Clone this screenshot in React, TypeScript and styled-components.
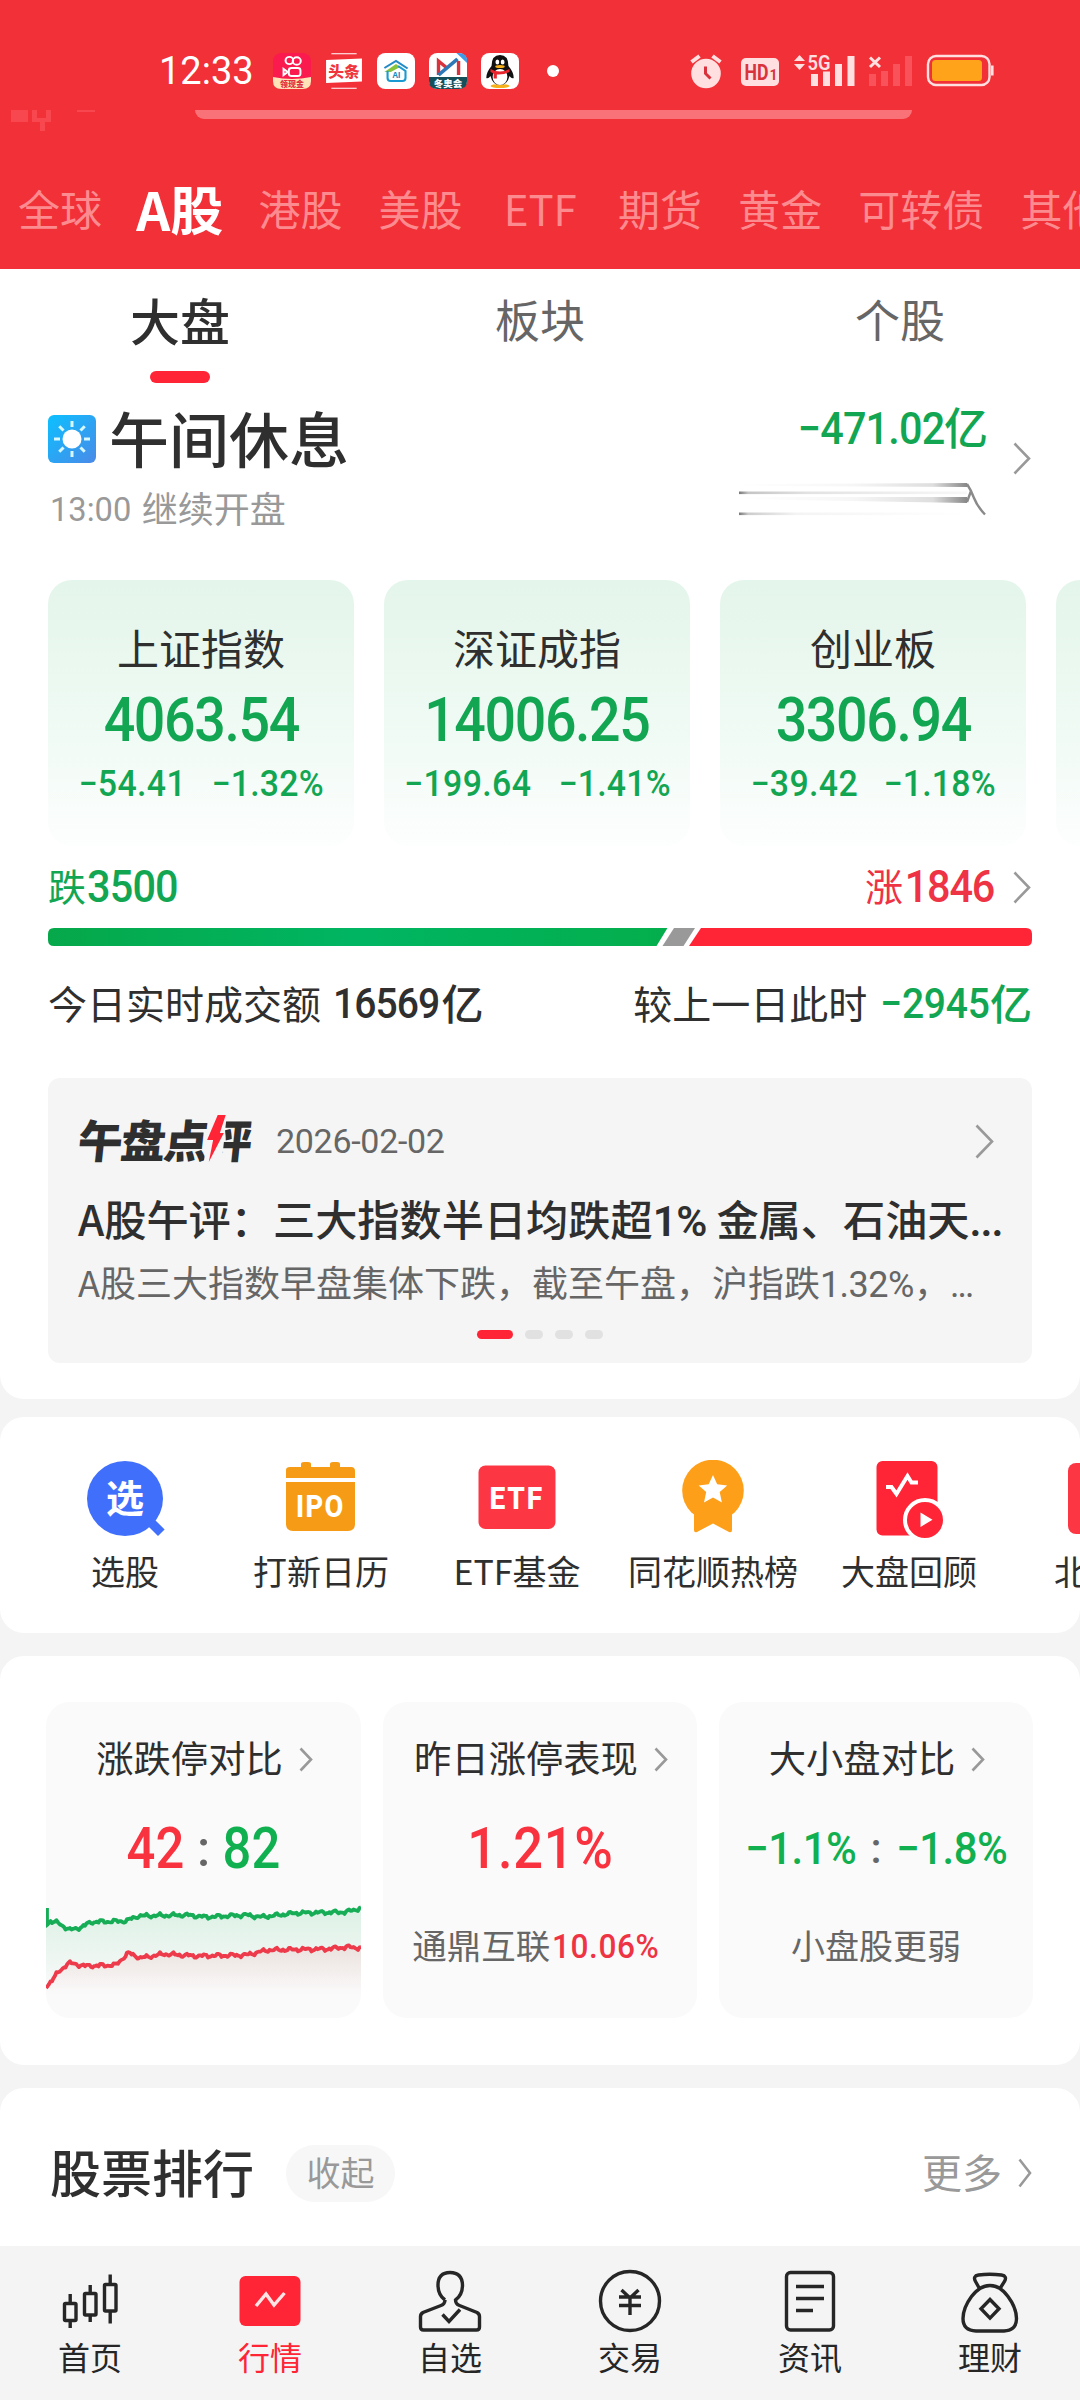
import React from "react";
import styled, { createGlobalStyle } from "styled-components";

const CJK = `"Noto Sans CJK SC", sans-serif`;
const DIGIT = `Roboto, "Noto Sans CJK SC", sans-serif`;

const C = {
  header: "#f23038",
  red: "#ff2436",
  redText: "#ee3344",
  green: "#12a652",
  ink: "#2f2f2f",
  mid: "#666666",
  soft: "#999999",
  page: "#f4f4f4",
};

const GlobalStyle = createGlobalStyle`
  * { box-sizing: border-box; }
  body { margin: 0; background: ${C.page}; }
`;

const Screen = styled.div`
  width: 1080px;
  height: 2400px;
  overflow: hidden;
  display: flex;
  flex-direction: column;
  background: ${C.page};
  font-family: ${CJK};
  color: ${C.ink};
`;

const Txt = styled.span<{ $s: number; $c?: string; $w?: number; $ls?: number }>`
  padding-bottom: 4px;
  font-size: ${(p) => p.$s}px;
  line-height: ${(p) => Math.round(p.$s * 1.2)}px;
  color: ${(p) => p.$c ?? "inherit"};
  font-weight: ${(p) => p.$w ?? 400};
  letter-spacing: ${(p) => p.$ls ?? 0}px;
  white-space: nowrap;
`;

/* Digits are condensed horizontally by $k, anchored at $o, with $m as margin */
const Num = styled(Txt)<{ $k?: number; $o?: string; $m?: string }>`
  padding-bottom: 0;
  display: block;
  font-family: ${DIGIT};
  font-weight: ${(p) => p.$w ?? 500};
  transform: ${(p) => (p.$k ? `scaleX(${p.$k})` : "none")};
  transform-origin: ${(p) => p.$o ?? "center"};
  margin: ${(p) => p.$m ?? "0"};
`;

const Latin = styled.span<{ $ls?: number; $w?: number }>`
  font-family: ${DIGIT};
  letter-spacing: ${(p) => p.$ls ?? 0}px;
  font-weight: ${(p) => p.$w ?? 400};
`;

/* ---------- header ---------- */

const Header = styled.header`
  height: 269px;
  flex: none;
  background: ${C.header};
  display: flex;
  flex-direction: column;
`;

const StatusBar = styled.div`
  height: 110px;
  padding: 32px 86px 0 159px;
  display: flex;
  align-items: center;
  justify-content: space-between;
`;

const StatusGroup = styled.div<{ $gap: number }>`
  display: flex;
  align-items: center;
  gap: ${(p) => p.$gap}px;
`;

const Clock = styled(Num)`
  width: 100px;
`;

const AppIcons = styled.div`
  display: flex;
  gap: 14px;
`;

const Dot = styled.i`
  width: 12px;
  height: 12px;
  margin-left: 14px;
  border-radius: 50%;
  background: #fff;
`;

const Peek = styled.div`
  height: 22px;
  display: flex;
`;

const PeekLeft = styled.svg`
  width: 195px;
  height: 22px;
`;

const PeekBar = styled.div`
  width: 717px;
  height: 9px;
  border-radius: 0 0 14px 14px;
  background: #f87277;
`;

const MarketTabs = styled.nav`
  height: 137px;
  width: 1140px;
  padding: 18px 0 0 18px;
  display: flex;
  align-items: center;
  gap: 36.2px;
`;

const MarketTab = styled(Txt)<{ $width: number; $shift: number }>`
  width: ${(p) => p.$width}px;
  margin: 0 ${(p) => p.$shift}px 0 ${(p) => -p.$shift}px;
  flex: none;
  text-align: center;
`;

/* ---------- market overview ---------- */

const Panel = styled.section<{ $h: number; $r: string }>`
  height: ${(p) => p.$h}px;
  flex: none;
  background: #fff;
  border-radius: ${(p) => p.$r};
  overflow: hidden;
`;

const SubTabs = styled.nav`
  height: 116px;
  display: grid;
  grid-template-columns: repeat(3, 1fr);
`;

const SubTab = styled.div`
  display: flex;
  flex-direction: column;
  align-items: center;
  padding-top: 12px;
`;

const SubTabLabel = styled.div`
  height: 80px;
  display: flex;
  align-items: center;
`;

const Underline = styled.i`
  width: 60px;
  height: 12px;
  margin-top: 10px;
  border-radius: 6px;
  background: ${C.red};
`;

const Session = styled.div`
  height: 195px;
  padding: 16px 49px 0 48px;
  display: flex;
  justify-content: space-between;
`;

const SessionTitle = styled.div`
  height: 76px;
  display: flex;
  align-items: center;
  gap: 13px;
`;

const SessionNote = styled.div`
  height: 60px;
  padding: 5px 0 0 2px;
  display: flex;
  align-items: center;
  gap: 7px;
`;

const Flow = styled.div`
  display: flex;
  align-items: flex-start;
  gap: 25px;
`;

const FlowColumn = styled.div`
  display: flex;
  flex-direction: column;
  align-items: flex-end;
  margin-top: -1px;
`;

const ChevronBox = styled.div<{ $top: number }>`
  display: flex;
  padding-top: ${(p) => p.$top}px;
`;

const Line = styled.div`
  display: flex;
  align-items: center;
`;

const IndexRow = styled.div`
  display: flex;
  gap: 30px;
  width: 1400px;
  padding-left: 48px;
`;

const IndexCard = styled.div`
  width: 306px;
  height: 266px;
  flex: none;
  border-radius: 24px;
  background: linear-gradient(#e4f5eb, #eefaf3 50%, #fdfefe);
  display: flex;
  flex-direction: column;
  align-items: center;
  padding-top: 36px;
`;

const IndexName = styled.div`
  height: 65px;
  display: flex;
  align-items: center;
`;

const IndexValue = styled.div`
  height: 78px;
  display: flex;
  align-items: center;
`;

const IndexChange = styled.div`
  height: 50px;
  display: flex;
  align-items: center;
  gap: 19px;
`;

const Breadth = styled.div`
  height: 82px;
  padding: 0 49px 0 48px;
  display: flex;
  align-items: center;
  justify-content: space-between;
`;

const BreadthSide = styled.div<{ $gap: number }>`
  display: flex;
  align-items: center;
  gap: ${(p) => p.$gap}px;
`;

const BreadthBar = styled.svg`
  display: block;
  margin-left: 48px;
`;

const Turnover = styled.div`
  height: 116px;
  padding: 0 48px;
  display: flex;
  align-items: center;
  justify-content: space-between;
`;

const News = styled.article`
  height: 285px;
  margin: 16px 48px 0;
  padding: 26px 30px 0;
  border-radius: 12px;
  background: #f5f5f5;
`;

const NewsHead = styled.div`
  height: 74px;
  display: flex;
  align-items: center;
  justify-content: space-between;
  padding-right: 8px;
`;

const Brand = styled.div`
  display: flex;
  align-items: center;
  width: 198px;
  transform: skewX(-6deg);
`;

const BrandTail = styled.div`
  position: relative;
  display: flex;
`;

const Bolt = styled.svg`
  position: absolute;
  left: -1px;
  top: 2px;
`;

const NewsTitle = styled.div`
  height: 87px;
  display: flex;
  align-items: center;
`;

const NewsText = styled.div`
  height: 40px;
  display: flex;
  align-items: center;
`;

const Pager = styled.div`
  height: 10px;
  margin-top: 25px;
  display: flex;
  justify-content: center;
  gap: 12px;
`;

const PagerDot = styled.i<{ $on?: boolean }>`
  width: ${(p) => (p.$on ? 36 : 18)}px;
  height: 9px;
  border-radius: 5px;
  background: ${(p) => (p.$on ? C.red : "#e1e1e1")};
`;

/* ---------- shortcuts ---------- */

const Shortcuts = styled.div`
  width: 1240px;
  padding: 43px 0 0 27px;
  display: flex;
`;

const Shortcut = styled.div`
  width: 196px;
  display: flex;
  flex-direction: column;
  align-items: center;
`;

const ShortcutLabel = styled.div`
  height: 64px;
  display: flex;
  align-items: center;
`;

/* ---------- statistics ---------- */

const Stats = styled.div`
  padding: 46px 46px 0;
  display: grid;
  grid-template-columns: 315px 314px 314px;
  gap: 22px;
`;

const StatCard = styled.div`
  height: 316px;
  border-radius: 24px;
  background: #fafafa;
  overflow: hidden;
  display: flex;
  flex-direction: column;
  align-items: center;
  padding-top: 30px;
`;

const StatTitle = styled.div`
  height: 54px;
  padding-left: 2px;
  display: flex;
  align-items: center;
  gap: 16px;
`;

const StatValue = styled.div<{ $gap?: number }>`
  height: 70px;
  margin-top: 28px;
  display: flex;
  align-items: center;
  gap: ${(p) => p.$gap ?? 15}px;
`;

const StatNote = styled.div`
  height: 60px;
  margin-top: 32px;
  display: flex;
  align-items: center;
  gap: 2px;
`;

/* ---------- ranking ---------- */

const Ranking = styled.div`
  height: 158px;
  padding: 12px 48px 0 50px;
  display: flex;
  align-items: center;
  justify-content: space-between;
`;

const Pill = styled.div`
  width: 109px;
  height: 57px;
  margin-left: 32px;
  border-radius: 29px;
  background: #f7f7f7;
  display: flex;
  align-items: center;
  justify-content: center;
`;

/* ---------- bottom navigation ---------- */

const BottomNav = styled.nav`
  height: 154px;
  flex: none;
  display: grid;
  grid-template-columns: repeat(6, 1fr);
  background: ${C.page};
`;

const NavItem = styled.div`
  display: flex;
  flex-direction: column;
  align-items: center;
  padding-top: 20px;
`;

const NavLabel = styled.div`
  height: 44px;
  margin-top: 2px;
  display: flex;
  align-items: center;
`;

const Gap = styled.div<{ $h: number }>`
  height: ${(p) => p.$h}px;
  flex: none;
`;

/* ---------- drawings ---------- */

const Chevron = ({ w, h, c = "#999", s = 2.6 }: { w: number; h: number; c?: string; s?: number }) => (
  <svg width={w} height={h} viewBox={`0 0 ${w} ${h}`}>
    <path d={`M1.5 1.5L${w - 2} ${h / 2}L1.5 ${h - 1.5}`} fill="none" stroke={c} strokeWidth={s} />
  </svg>
);

const Tile = ({ bg, children }: { bg: string; children: React.ReactNode }) => (
  <svg width="38" height="36" viewBox="0 0 36 36" preserveAspectRatio="none">
    <rect width="36" height="36" rx="8" fill={bg} />
    {children}
  </svg>
);

const StatusApps = () => (
  <AppIcons>
    <Tile bg="#fb1a4e">
      <g fill="none" stroke="#fff" strokeWidth="1.9">
        <circle cx="15.500" cy="7.500" r="3.600" />
        <circle cx="22.500" cy="8" r="3.800" />
        <rect x="15" y="15" width="11" height="8" rx="2.500" />
        <path d="M14 19l-4-3v6z" />
      </g>
      <path d="M0 24q18 4 36 0v4q0 8-8 8H8q-8 0-8-8z" fill="#ffe3b8" />
      <text x="18" y="34" fontSize="7.500" fontWeight="900" textAnchor="middle" fill="#e0323c">领现金</text>
    </Tile>
    <Tile bg={C.header}>
      <path d="M6 .7h24M6 35.3h24" stroke="#fff" strokeWidth="1" />
      <path d="M1 7l34-1.5v23L1 30z" fill="#fff" />
      <text x="18" y="24" fontSize="15" fontWeight="900" textAnchor="middle" fill="#f0353d">头条</text>
    </Tile>
    <Tile bg="#fff">
      <path d="M7 15L18 8l11 7.500" fill="none" stroke="#2489c8" strokeWidth="2" />
      <path d="M7 19l11-8 4 3-9 5" fill="#86c440" />
      <path d="M10 18v7q0 3 3 3h11q3 0 3-3v-7l-7-5" fill="none" stroke="#1a9ad0" strokeWidth="2" />
      <text x="18.500" y="25" fontSize="8" fontWeight="700" textAnchor="middle" fill="#1a8ac0">AI</text>
    </Tile>
    <Tile bg="#fff">
      <path d="M26 0h2q8 0 8 8v2z" fill="#3f9be8" />
      <path d="M9 22V8l8 7" fill="none" stroke="#d8323c" strokeWidth="3.200" />
      <path d="M9 22L27 6" stroke="#2c78b8" strokeWidth="3.600" />
      <path d="M28 8v14" stroke="#d8323c" strokeWidth="3.200" />
      <path d="M0 24h36v4q0 8-8 8H8q-8 0-8-8z" fill="#15505a" />
      <text x="18" y="34" fontSize="9" fontWeight="900" textAnchor="middle" fill="#fff">冬奥会</text>
    </Tile>
    <Tile bg="#fff">
      <ellipse cx="18" cy="33" rx="9" ry="2" fill="#f5b01c" />
      <path d="M10 13q0-11 8-11t8 11q5 6 5 12-2 1-4-2-2 9-9 9t-9-9q-2 3-4 2 0-6 5-12z" fill="#111" />
      <ellipse cx="18" cy="24" rx="7" ry="8" fill="#fff" />
      <ellipse cx="15.500" cy="9" rx="1.800" ry="2.600" fill="#fff" />
      <ellipse cx="20.500" cy="9" rx="1.800" ry="2.600" fill="#fff" />
      <ellipse cx="18" cy="13.500" rx="4.500" ry="1.500" fill="#f5b01c" />
      <path d="M9 16q9 5 18 0v3q-6 3-12 2.500v4h-3v-5l-3-1.500z" fill="#e8242c" />
    </Tile>
  </AppIcons>
);

const P = "#ffdfe0";
const StatusSignals = () => (
  <svg width="304" height="38" viewBox="690 52 304 38">
    <circle cx="706" cy="73.500" r="14.800" fill={P} />
    <path d="M691.500 62l8-6M712.500 56l8 6" stroke={P} strokeWidth="4" />
    <path d="M705.500 66.500v7l5 5" fill="none" stroke="#d8333c" strokeWidth="3" />
    <rect x="741" y="58" width="38" height="28" rx="5" fill={P} />
    <text x="744.500" y="80" fontFamily="Roboto" fontWeight="700" fontSize="22" textLength="24" lengthAdjust="spacingAndGlyphs" fill="#d8333c">HD</text>
    <text x="769.500" y="80" fontFamily="Roboto" fontWeight="700" fontSize="14" fill="#d8333c">1</text>
    <path d="M794 61l5.500-6 5.500 6zM794 64l5.500 6 5.500-6z" fill={P} />
    <text x="807.500" y="69.500" fontFamily="Roboto" fontWeight="600" fontSize="21" textLength="23" lengthAdjust="spacingAndGlyphs" fill={P}>5G</text>
    <path d="M811 74h7v12h-7zM823 71.500h7V86h-7zM835 64h7v22h-7zM847.500 56h7v30h-7z" fill={P} />
    <path d="M870 57.500l10 9.500M880 57.500l-10 9.500" stroke={P} strokeWidth="3" />
    <path d="M869 74h7v12h-7zM881 71h7v15h-7zM893 64h7v22h-7zM905 56h7v30h-7z" fill="#f9525a" />
    <rect x="928" y="56" width="61.500" height="29" rx="8" fill="none" stroke={P} strokeWidth="2.400" />
    <rect x="932" y="60" width="50" height="21" rx="3.500" fill="#ffa31a" />
    <path d="M992.300 65.500v10" stroke={P} strokeWidth="2.600" />
  </svg>
);

const Sun = () => (
  <svg width="48" height="48" viewBox="0 0 48 48">
    <defs>
      <linearGradient id="sky" x1="0" y1="0" x2="1" y2="1">
        <stop offset="0" stopColor="#0cc0ff" />
        <stop offset="1" stopColor="#4a8ae8" />
      </linearGradient>
    </defs>
    <rect width="48" height="48" rx="6" fill="url(#sky)" />
    <circle cx="24" cy="24" r="9.500" fill="#fff" />
    {[0, 45, 90, 135, 180, 225, 270, 315].map((a) => (
      <path key={a} d="M24 6v6" stroke="#d8f8ff" strokeWidth="3" transform={`rotate(${a} 24 24)`} />
    ))}
  </svg>
);

const FlowSpark = () => (
  <svg width="249" height="38" viewBox="740 480 249 38">
    <defs>
      <linearGradient id="fa"><stop offset="0" stopColor="#777" /><stop offset=".04" stopColor="#c4c4c4" /><stop offset=".3" stopColor="#e2e2e2" /><stop offset="1" stopColor="#f8f8f8" /></linearGradient>
      <linearGradient id="fb"><stop offset="0" stopColor="#fff" /><stop offset=".5" stopColor="#f6f6f6" /><stop offset=".85" stopColor="#dedede" /><stop offset="1" stopColor="#888" /></linearGradient>
      <linearGradient id="fc"><stop offset="0" stopColor="#777" /><stop offset=".04" stopColor="#ccc" /><stop offset=".25" stopColor="#f4f4f4" /><stop offset="1" stopColor="#fff" /></linearGradient>
    </defs>
    <rect x="740" y="491.500" width="228" height="2.600" fill="url(#fa)" />
    <path d="M740 484L968 483v4L740 486z" fill="url(#fb)" />
    <path d="M740 497L968 497v6L740 499z" fill="url(#fb)" />
    <rect x="740" y="512.500" width="228" height="2.600" fill="url(#fc)" />
    <path d="M968 484Q972 490 975 498T986 514.500M968 502L972 491" fill="none" stroke="#8a8a8a" strokeWidth="2.400" />
  </svg>
);

const Breakdown = () => (
  <BreadthBar width="984" height="18" viewBox="48 928 984 18">
    <defs>
      <linearGradient id="down"><stop offset="0" stopColor="#06a84a" /><stop offset=".5" stopColor="#00b562" /><stop offset="1" stopColor="#04ae4c" /></linearGradient>
    </defs>
    <path d="M54 928H667.500L656.500 946H54q-6 0-6-6v-6q0-6 6-6z" fill="url(#down)" />
    <path d="M674 928h21l-11.500 18h-21z" fill="#999" />
    <path d="M701 928h325q6 0 6 6v6q0 6-6 6H689z" fill="#ff2536" />
  </BreadthBar>
);

const IcPick = () => (
  <svg width="80" height="80" viewBox="0 0 80 80">
    <ellipse cx="40" cy="38.500" rx="38" ry="37.500" fill="#4070fb" />
    <path d="M64 65l9 9 4.500-4.500-9-9z" fill="#4070fb" stroke="#4070fb" strokeWidth="3" />
    <text x="40" y="52" fontSize="38" fontWeight="700" textAnchor="middle" fill="#fff" fontFamily="Noto Sans CJK SC">选</text>
  </svg>
);
const IcIpo = () => (
  <svg width="80" height="80" viewBox="0 0 80 80">
    <path d="M5 10q0-3 4-3h11V4q0-2 3-2h4q3 0 3 2v3h19V4q0-2 3-2h4q3 0 3 2v3h11q4 0 4 4v7H5zM5 22h69v42q0 7-7 7H12q-7 0-7-7z" fill="#f59b16" />
    <text transform="translate(15 57) scale(.88 1)" fontSize="31" fontWeight="800" fill="#fff" fontFamily="Roboto" letterSpacing="1.500">IPO</text>
  </svg>
);
const IcEtf = () => (
  <svg width="80" height="80" viewBox="0 0 80 80">
    <rect x="1.500" y="5.500" width="77" height="63.500" rx="7" fill="#fd3644" />
    <text transform="translate(12.500 48.500) scale(.88 1)" fontSize="32" fontWeight="800" fill="#fff" fontFamily="Roboto" letterSpacing="2">ETF</text>
  </svg>
);
const IcRank = () => (
  <svg width="80" height="80" viewBox="0 0 80 80">
    <circle cx="40" cy="30.500" r="30.800" fill="#fe9f1a" />
    <path d="M21 50v20q0 3 3 2l16-8.500L56 72q3 1 3-2V50z" fill="#fe9f1a" />
    <path d="M40 15l4.200 9.200 10 1.200-7.500 6.700 2.200 10.300L40 37.500l-9 4.900 2.200-10.300-7.500-6.700 10-1.200z" fill="#fff" />
  </svg>
);
const IcReview = () => (
  <svg width="80" height="80" viewBox="0 0 80 80">
    <rect x="7.500" y="1" width="61" height="74.500" rx="6" fill="#ff2537" />
    <path d="M17 27h5.500l5 7L38.500 16l4 6.500H49" fill="none" stroke="#fff" strokeWidth="4" />
    <circle cx="56" cy="60" r="20" fill="#ff2537" stroke="#fff" strokeWidth="4" />
    <path d="M51.500 52.500v14.500l12-7.200z" fill="#fff" />
  </svg>
);
const IcNorth = () => (
  <svg width="80" height="80" viewBox="0 0 80 80">
    <rect x="3" y="3" width="74" height="71" rx="8" fill="#fd3644" />
  </svg>
);

const LimitChart = () => {
  const noise = (i: number) => Math.sin(i * 2.3) * 0.5 + Math.sin(i * 0.43) * 1.1 + Math.sin(i * 0.97 + 1) * 0.9;
  const build = (pts: number[][]) => {
    let d = "";
    for (let x = 0; x <= 315; x += 1.5) {
      let k = 0;
      while (k < pts.length - 2 && pts[k + 1][0] < x) k++;
      const [a, b] = [pts[k], pts[k + 1]];
      const y = a[1] + ((b[1] - a[1]) * (x - a[0])) / (b[0] - a[0]) + noise(x);
      d += `${d ? "L" : "M"}${x.toFixed(1)} ${y.toFixed(1)}`;
    }
    return d;
  };
  const up = build([[0, 20], [4, 16], [12, 18], [24, 25], [36, 22], [45, 17], [80, 16], [92, 11], [140, 10], [160, 12], [200, 10], [215, 12], [250, 8], [300, 7], [315, 3]]);
  const dn = build([[0, 82], [10, 70], [22, 58], [40, 61], [70, 60], [82, 48], [95, 53], [118, 49], [150, 51], [200, 50], [222, 45], [280, 44], [302, 42], [315, 43]]);
  return (
    <svg width="315" height="100" viewBox="0 -7 315 100">
      <defs>
        <linearGradient id="gu" x1="0" y1="0" x2="0" y2="1"><stop offset="0" stopColor="#12b25a" stopOpacity=".13" /><stop offset="1" stopColor="#12b25a" stopOpacity="0" /></linearGradient>
        <linearGradient id="gd" x1="0" y1="0" x2="0" y2="1"><stop offset="0" stopColor="#f03040" stopOpacity=".1" /><stop offset="1" stopColor="#f03040" stopOpacity="0" /></linearGradient>
      </defs>
      <path d={`${up}V86H0z`} fill="url(#gu)" />
      <path d={`${dn}V90H0z`} fill="url(#gd)" />
      <path d={`M1 3V20${up.replace("M", "L")}`} fill="none" stroke="#17ad57" strokeWidth="3.800" strokeLinejoin="round" />
      <path d={dn} fill="none" stroke="#ee3b4b" strokeWidth="3.800" strokeLinejoin="round" />
    </svg>
  );
};

const K = "#262626";
const NavSvg = ({ children }: { children: React.ReactNode }) => (
  <svg width="70" height="68" viewBox="0 0 70 68" fill="none" stroke={K} strokeWidth="3.400">{children}</svg>
);
const navIcons = [
  <NavSvg key="0">
    <rect x="9.500" y="37.500" width="11.500" height="17" rx="1" />
    <rect x="29.500" y="27.500" width="11.500" height="21.500" rx="1" />
    <rect x="49.500" y="18.500" width="11.500" height="26.500" rx="1" />
    <path d="M15.200 28v9M15.200 55v7M35.200 19v9M35.200 49v7M55.200 8.500v10M55.200 45v12.500" />
  </NavSvg>,
  <NavSvg key="1">
    <rect x="4.500" y="10" width="61" height="50" rx="6" fill="#ff2537" stroke="none" />
    <path d="M21 40l10-12 8 11 10.500-12" stroke="#ffe4e6" />
  </NavSvg>,
  <NavSvg key="2">
    <path d="M30 34q-7-5-7-15 0-12.500 12-12.500T47.500 19q0 10-7 15 0 4 4 5.500L62 46.500q2.500 1.500 2.500 4V61q0 3-3 3H8.500q-3 0-3-3V50.500q0-2.500 2.500-4L26 39.500q4-1.500 4-5.500" />
    <path d="M27.500 48.500l6.500 7 11-12" />
  </NavSvg>,
  <NavSvg key="3">
    <circle cx="35" cy="35" r="29.500" />
    <path d="M26.500 24l8.500 8 8.500-8M24 31h22M24 39.500h22M35 31v18" />
  </NavSvg>,
  <NavSvg key="4">
    <rect x="11.500" y="6.500" width="47" height="57.500" rx="4" />
    <path d="M21 20.500h28M21 32.500h28M21 44.500h17" />
  </NavSvg>,
  <NavSvg key="5">
    <path d="M24.500 22.500l-4-7q-3-5.500 3-6.500 11-1.500 23 0 6 1 3 6.500l-4.500 7" />
    <path d="M35 19.500q10 0 18 11 8.500 11.500 8.500 22 0 12-12.500 12.500h-28Q8 64.500 8 52.500q0-10.500 8.500-22Q25 19.500 35 19.500z" />
    <path d="M35 33.500l9 9.300-9 9.300-9-9.300z" />
  </NavSvg>,
];

/* ---------- data ---------- */

const markets: [string, number][] = [
  ["全球", 84], ["A股", 84], ["港股", 84], ["美股", 84], ["ETF", 83],
  ["期货", 84], ["黄金", 84], ["可转债", 126], ["其他", 84],
];
const indices = [
  ["上证指数", "4063.54", "−54.41", "−1.32%"],
  ["深证成指", "14006.25", "−199.64", "−1.41%"],
  ["创业板", "3306.94", "−39.42", "−1.18%"],
  ["", "", "", ""],
];
const shortcuts: [string, React.ReactNode][] = [
  ["选股", <IcPick />], ["打新日历", <IcIpo />], ["ETF基金", <IcEtf />],
  ["同花顺热榜", <IcRank />], ["大盘回顾", <IcReview />], ["北交所", <IcNorth />],
];
const navs = ["首页", "行情", "自选", "交易", "资讯", "理财"];

export default function App() {
  return (
    <Screen>
      <GlobalStyle />
      <Header>
        <StatusBar>
          <StatusGroup $gap={14}>
            <Clock $s={38} $c="#fff" $w={400}>12:33</Clock>
            <StatusApps />
            <Dot />
          </StatusGroup>
          <StatusSignals />
        </StatusBar>
        <Peek>
          <PeekLeft viewBox="0 0 195 22">
            <path d="M11 0h17v12H11zM32 0h5v8h9V0h5v12h-6v9h-5v-9h-8zM77 0h18v2H77z" fill="#f8474f" />
          </PeekLeft>
          <PeekBar />
        </Peek>
        <MarketTabs>
          {markets.map(([name, width]) => {
            const on = name === "A股";
            return (
              <MarketTab
                key={name}
                $width={width}
                $shift={on ? 2 : 0}
                $s={on ? 53 : 42}
                $w={on ? 600 : 400}
                $c={on ? "#fff" : "#fb8b8f"}
              >
                {name}
              </MarketTab>
            );
          })}
        </MarketTabs>
      </Header>

      <Panel $h={1130} $r="0 0 24px 24px">
        <SubTabs>
          <SubTab>
            <SubTabLabel><Txt $s={50} $w={500}>大盘</Txt></SubTabLabel>
            <Underline />
          </SubTab>
          <SubTab><SubTabLabel><Txt $s={45} $c={C.mid}>板块</Txt></SubTabLabel></SubTab>
          <SubTab><SubTabLabel><Txt $s={45} $c={C.mid}>个股</Txt></SubTabLabel></SubTab>
        </SubTabs>

        <Session>
          <div>
            <SessionTitle><Sun /><Txt $s={60} $w={500}>午间休息</Txt></SessionTitle>
            <SessionNote>
              <Num $s={34} $c={C.soft} $w={400} $k={0.96} $o="left">13:00</Num>
              <Txt $s={36} $c={C.soft}>继续开盘</Txt>
            </SessionNote>
          </div>
          <Flow>
            <FlowColumn>
              <Line>
                <Num $s={45} $c={C.green} $ls={-0.9} $k={0.92} $o="right">−471.02</Num>
                <Txt $s={44} $c={C.green} $w={500}>亿</Txt>
              </Line>
              <Gap $h={23} />
              <FlowSpark />
            </FlowColumn>
            <ChevronBox $top={41}><Chevron w={18} h={33} /></ChevronBox>
          </Flow>
        </Session>

        <IndexRow>
          {indices.map(([name, value, diff, pct], i) => (
            <IndexCard key={i}>
              <IndexName><Txt $s={42}>{name}</Txt></IndexName>
              <IndexValue><Num $s={61} $c={C.green} $ls={-1.5} $k={0.91}>{value}</Num></IndexValue>
              <IndexChange>
                <Num $s={36} $c={C.green} $ls={0.4} $k={0.94}>{diff}</Num>
                <Num $s={36} $c={C.green} $ls={0.2} $k={0.94}>{pct}</Num>
              </IndexChange>
            </IndexCard>
          ))}
        </IndexRow>

        <Breadth>
          <BreadthSide $gap={1}>
            <Txt $s={38} $c={C.green}>跌</Txt>
            <Num $s={45} $c={C.green} $ls={-0.9} $k={0.92} $o="left">3500</Num>
          </BreadthSide>
          <BreadthSide $gap={19}>
            <Line>
              <Txt $s={38} $c={C.redText}>涨</Txt>
              <Num $s={45} $c={C.redText} $ls={-1.3} $k={0.92} $o="right" $m="0 0 0 -6px">1846</Num>
            </Line>
            <Chevron w={18} h={33} />
          </BreadthSide>
        </Breadth>
        <Breakdown />
        <Turnover>
          <BreadthSide $gap={12}>
            <Txt $s={39}>今日实时成交额</Txt>
            <Line>
              <Num $s={42} $ls={-1} $k={0.93} $o="left" $m="0 -6px 0 0">16569</Num>
              <Txt $s={42} $w={500}>亿</Txt>
            </Line>
          </BreadthSide>
          <BreadthSide $gap={13}>
            <Txt $s={39}>较上一日此时</Txt>
            <Line>
              <Num $s={42} $c={C.green} $ls={-0.3} $k={0.93} $o="right" $m="0 0 0 -8px">−2945</Num>
              <Txt $s={42} $c={C.green} $w={500}>亿</Txt>
            </Line>
          </BreadthSide>
        </Turnover>

        <News>
          <NewsHead>
            <Line>
              <Brand>
                <Txt $s={45} $w={900} $ls={-2}>午盘点</Txt>
                <BrandTail>
                  <Txt $s={45} $w={900}>评</Txt>
                  <Bolt width="19" height="48" viewBox="0 0 19 48">
                    <path d="M0 0h18v48H0z" fill="#f5f5f5" />
                    <path d="M9 1h8l-4 18h4L5 48l2-22H1z" fill="#ff2537" />
                  </Bolt>
                </BrandTail>
              </Brand>
              <Num $s={34} $c={C.mid} $w={400} $ls={-0.3}>2026-02-02</Num>
            </Line>
            <Chevron w={19} h={35} />
          </NewsHead>
          <NewsTitle>
            <Txt $s={42.2} $w={500}>
              A股午评：三大指数半日均跌超<Latin $w={600} $ls={-0.5}>1%</Latin> 金属、石油天<Latin $w={600} $ls={-1}>...</Latin>
            </Txt>
          </NewsTitle>
          <NewsText>
            <Txt $s={36} $c={C.mid}>
              A股三大指数早盘集体下跌，截至午盘，沪指跌<Latin $ls={-0.5}>1.32%</Latin>，<Latin $ls={-2}>...</Latin>
            </Txt>
          </NewsText>
          <Pager><PagerDot $on /><PagerDot /><PagerDot /><PagerDot /></Pager>
        </News>
      </Panel>

      <Gap $h={18} />
      <Panel $h={216} $r="24px">
        <Shortcuts>
          {shortcuts.map(([name, icon]) => (
            <Shortcut key={name}>
              {icon}
              <ShortcutLabel><Txt $s={34}>{name}</Txt></ShortcutLabel>
            </Shortcut>
          ))}
        </Shortcuts>
      </Panel>

      <Gap $h={23} />
      <Panel $h={409} $r="24px">
        <Stats>
          <StatCard>
            <StatTitle><Txt $s={37.3}>涨跌停对比</Txt><Chevron w={14} h={25} /></StatTitle>
            <StatValue $gap={9}>
              <Num $s={57} $c="#f8333f" $k={0.89}>42</Num>
              <Num $s={50} $c={C.mid}>:</Num>
              <Num $s={57} $c="#10b050" $k={0.89}>82</Num>
            </StatValue>
            <Gap $h={14} />
            <LimitChart />
          </StatCard>
          <StatCard>
            <StatTitle><Txt $s={37.3}>昨日涨停表现</Txt><Chevron w={14} h={25} /></StatTitle>
            <StatValue><Num $s={57} $c="#f8333f" $ls={0.8} $k={0.92}>1.21%</Num></StatValue>
            <StatNote>
              <Txt $s={34.5} $c={C.mid}>通鼎互联</Txt>
              <Num $s={34} $c={C.redText} $ls={0.6} $k={0.93} $o="left">10.06%</Num>
            </StatNote>
          </StatCard>
          <StatCard>
            <StatTitle><Txt $s={37.3}>大小盘对比</Txt><Chevron w={14} h={25} /></StatTitle>
            <StatValue $gap={10}>
              <Num $s={45} $c="#10b050" $ls={-0.5} $k={0.93}>−1.1%</Num>
              <Num $s={42} $c={C.mid}>:</Num>
              <Num $s={45} $c="#10b050" $ls={-0.5} $k={0.93}>−1.8%</Num>
            </StatValue>
            <StatNote><Txt $s={34} $c={C.mid}>小盘股更弱</Txt></StatNote>
          </StatCard>
        </Stats>
      </Panel>

      <Gap $h={23} />
      <Panel $h={158} $r="24px 24px 0 0">
        <Ranking>
          <Line>
            <Txt $s={51} $w={500}>股票排行</Txt>
            <Pill><Txt $s={34} $c={C.soft}>收起</Txt></Pill>
          </Line>
          <BreadthSide $gap={16}>
            <Txt $s={40} $c={C.soft}>更多</Txt>
            <Chevron w={14} h={30} />
          </BreadthSide>
        </Ranking>
      </Panel>

      <BottomNav>
        {navs.map((name, i) => (
          <NavItem key={name}>
            {navIcons[i]}
            <NavLabel><Txt $s={32} $c={i === 1 ? C.red : K}>{name}</Txt></NavLabel>
          </NavItem>
        ))}
      </BottomNav>
    </Screen>
  );
}
